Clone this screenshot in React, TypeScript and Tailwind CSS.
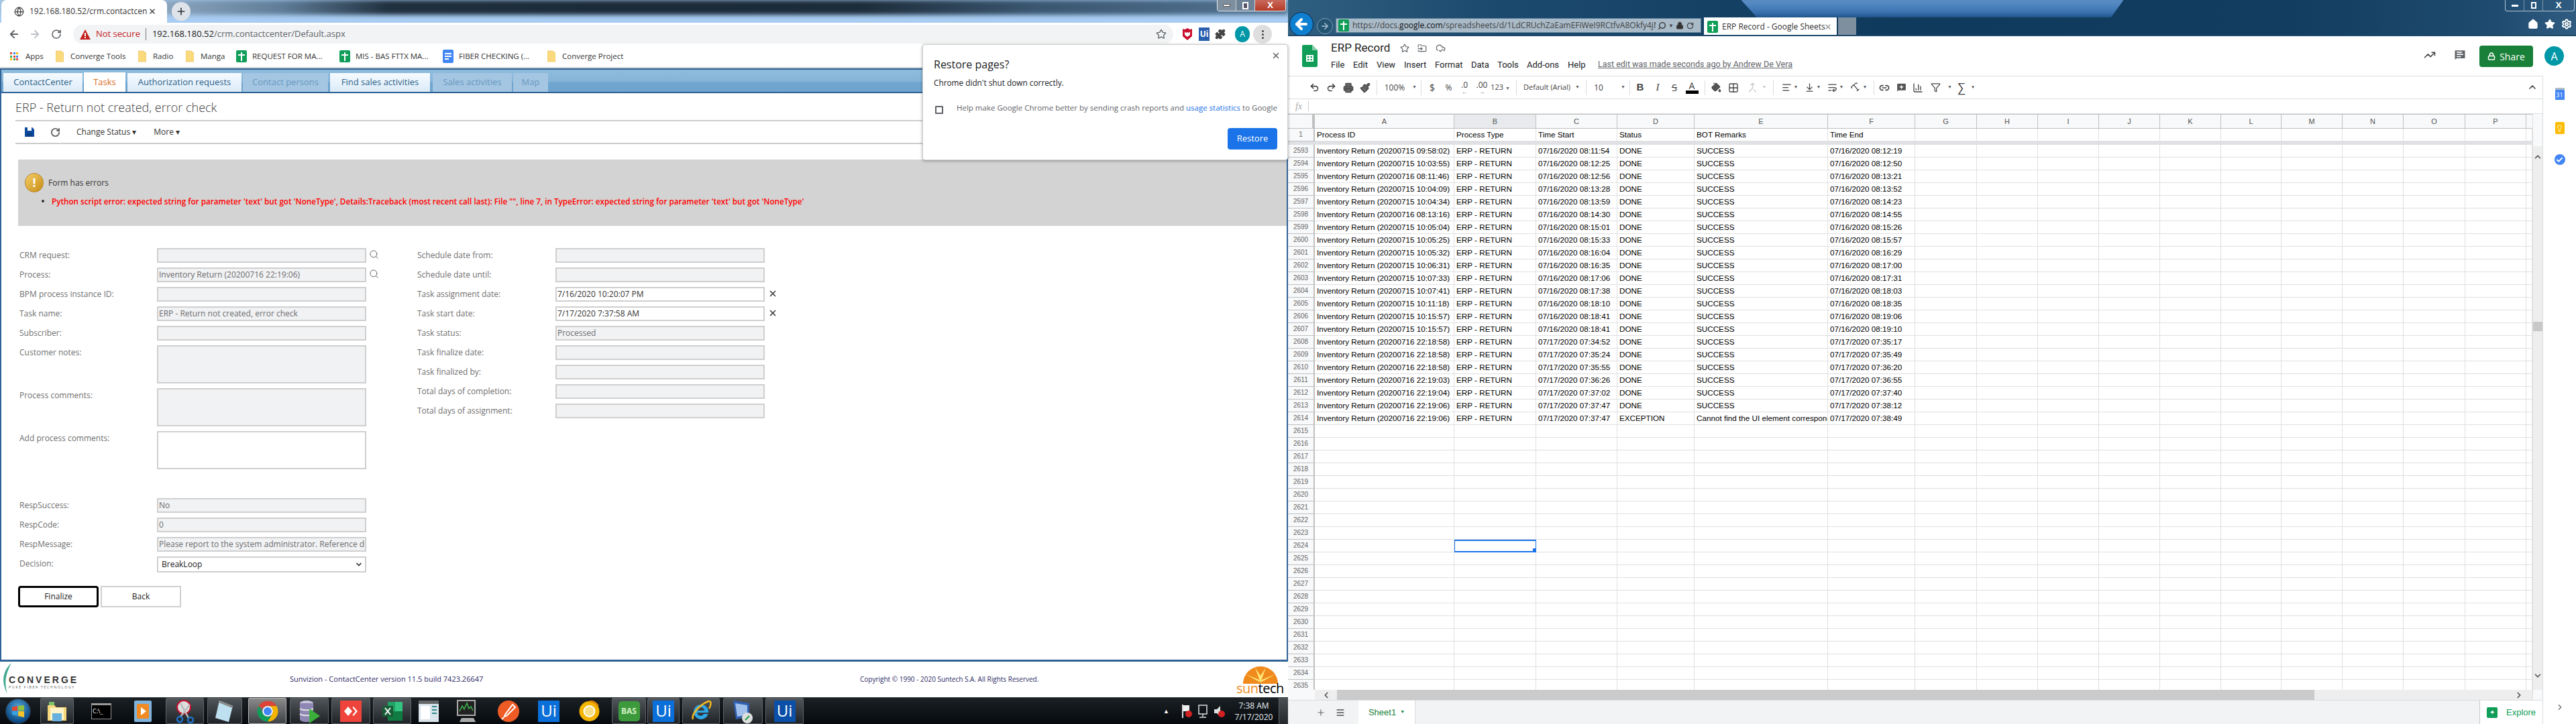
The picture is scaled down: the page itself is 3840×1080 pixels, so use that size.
import React from "react";
import { ArrowLeft, ArrowRight, RotateCw, Star, Puzzle, X, Search, Plus, Globe, Undo2, Redo2, Printer, Paintbrush, PaintBucket, Grid2x2, Link2, MessageSquarePlus, ChartColumn, Filter, AlignLeft, ArrowDownToLine, ChevronUp, ChevronDown, ChevronLeft, ChevronRight, Lock, TrendingUp, MessageSquareText, Menu, House, Settings, FolderInput, CloudCheck, Check, Lightbulb, Merge, Type, WrapText } from "lucide-react";

const Chrome = ({ s = 34 }: { s?: number }) => (
  <svg width={s} height={s} viewBox="0 0 48 48">
    <path d="M5 13A22 22 0 0 1 43 13H24A11 11 0 0 0 14.5 18.5z" fill="#db4437" />
    <path d="M43 13A22 22 0 0 1 24 46L33.5 29.5A11 11 0 0 0 24 13z" fill="#f4b400" />
    <path d="M24 46A22 22 0 0 1 5 13L14.5 29.5A11 11 0 0 0 33.5 29.5z" fill="#0f9d58" />
    <circle cx="24" cy="24" r="11" fill="#fff" />
    <circle cx="24" cy="24" r="8.5" fill="#4285f4" />
  </svg>
);

const SheetIcon = ({ w = 14, h = 18 }: { w?: number; h?: number }) => (
  <svg width={w} height={h} viewBox="0 0 23 33">
    <path d="M2 0H15L23 8V31a2 2 0 0 1-2 2H2a2 2 0 0 1-2-2V2a2 2 0 0 1 2-2z" fill="#0f9d58" />
    <path d="M15 0L23 8H15z" fill="#87ceac" />
    <path d="M6 15H17V25H6zM8 17V19H10.5V17zM12.5 17V19H15V17zM8 21V23H10.5V21zM12.5 21V23H15V21z" fill="#fff" fillRule="evenodd" />
  </svg>
);

const GreenCross = () => (
  <span className="w-[16px] h-[18px] rounded-[2px] bg-[#0f9d58] flex items-center justify-center relative shrink-0">
    <span className="absolute w-[2px] h-[13px] bg-white" />
    <span className="absolute w-[10px] h-[2px] top-[6px] bg-white" />
  </span>
);

const Folder = () => (
  <svg width="12" height="18" viewBox="0 0 12 18" className="block"><path d="M0 1h8l4 3v13H0z" fill="#fbd97d" stroke="#e5c163" strokeWidth="0.7" /></svg>
);

function LeftTitle() {
  return (
    <div className="h-[34px] relative overflow-hidden bg-[#a9cdf2] shrink-0">
      <div className="absolute left-0 top-0 w-[1920px] h-[22px] blur-[3px] bg-[linear-gradient(90deg,#9fbcd8_0px,#8fa9c2_230px,#5f7d98_420px,#20303f_580px,#1c2b3a_900px,#1d2c3a_1280px,#3a5670_1540px,#4b6b88_1800px,#50728f_1920px)]" />
      <div className="h-[34px] w-[247px] bg-white rounded-t-[8px] absolute left-[2px] top-0 flex items-center text-[12px] text-[#333]">
        <Globe className="ml-[19px] text-[#444] shrink-0" size={15} />
        <span className="ml-[8px] w-[175px] overflow-hidden whitespace-nowrap">192.168.180.52/crm.contactcenter</span>
        <X className="ml-[2px] text-[#444] shrink-0" size={12} strokeWidth={3} />
      </div>
      <div className="absolute left-[256px] top-[3px] w-[28px] h-[28px] rounded-full bg-[#dde3e9] flex items-center justify-center"><Plus size={16} className="text-[#333]" strokeWidth={2.5} /></div>
      <div className="absolute left-[1814px] top-0 w-[103px] h-[17px] rounded-b-[4px] border border-t-0 border-[#e8edf2] flex overflow-hidden">
        <div className="w-[28px] bg-[#7d8e9e] border-r border-[#cdd5dc] flex items-center justify-center"><span className="w-[11px] h-[4px] bg-white border border-[#555]" /></div>
        <div className="w-[28px] bg-[#6d8296] border-r border-[#cdd5dc] flex items-center justify-center"><span className="w-[9px] h-[11px] border-2 border-white bg-[#556]" /></div>
        <div className="flex-1 bg-[linear-gradient(180deg,#c86a5c,#b63a28)] flex items-center justify-center text-white font-bold text-[13px]">X</div>
      </div>
    </div>
  );
}

function ChromeBar() {
  return (
    <div className="h-[34px] bg-white flex items-center shrink-0">
      <ArrowLeft size={18} className="ml-[12px] text-[#5f6368]" strokeWidth={2.4} />
      <ArrowRight size={18} className="ml-[13px] text-[#bdc1c6]" strokeWidth={2.4} />
      <RotateCw size={16} className="ml-[15px] text-[#5f6368]" strokeWidth={2.4} />
      <div className="ml-[17px] h-[28px] w-[1640px] bg-[#f1f3f4] rounded-full flex items-center text-[13px]">
        <svg width="16" height="15" viewBox="0 0 16 15" className="ml-[10px]"><path d="M8 0L16 15H0z" fill="#c5221f" /><path d="M7 5h2v5H7zM7 11h2v2H7z" fill="#fff" /></svg>
        <span className="ml-[8px] text-[#c5221f]">Not secure</span>
        <span className="ml-[8px] w-px h-[18px] bg-[#777]" />
        <span className="ml-[9px] text-[#202124]">192.168.180.52<span className="text-[#5f6368]">/crm.contactcenter/Default.aspx</span></span>
        <Star size={16} className="ml-auto mr-[10px] text-[#5f6368]" strokeWidth={2} />
      </div>
      <svg width="14" height="20" viewBox="0 0 14 20" className="ml-[14px]"><path d="M0 2l3 1 4-2 4 2 3-1v11l-7 6-7-6z" fill="#c8102e" /><path d="M3 6l2 2 2-1 2 1 2-2v5l-4 3-4-3z" fill="#fff" /></svg>
      <span className="ml-[10px] w-[16px] h-[20px] bg-[#2a5fb0] text-white text-[12px] font-bold flex items-center justify-center">Ui</span>
      <Puzzle size={16} className="ml-[8px] text-[#444] fill-[#444]" />
      <span className="ml-[14px] w-[22px] h-[24px] rounded-full bg-[#0097a7] text-white text-[12px] flex items-center justify-center">A</span>
      <span className="ml-[5px] w-[28px] h-[28px] rounded-full bg-[#dedede] flex flex-col items-center justify-center gap-[2px]">
        <i className="w-[3px] h-[3px] rounded-full bg-[#444]" /><i className="w-[3px] h-[3px] rounded-full bg-[#444]" /><i className="w-[3px] h-[3px] rounded-full bg-[#444]" />
      </span>
    </div>
  );
}

function Bookmarks() {
  const dots = ["bg-[#ea4335]", "bg-[#4285f4]", "bg-[#fbbc05]", "bg-[#34a853]", "bg-[#ea4335]", "bg-[#4285f4]", "bg-[#fbbc05]", "bg-[#34a853]", "bg-[#ea4335]"];
  return (
    <div className="h-[34px] bg-white border-b-2 border-[#d0d3d6] flex items-center text-[11.5px] text-[#333] shrink-0 whitespace-nowrap">
      <span className="ml-[15px] w-[12px] grid grid-cols-3 gap-[1.5px]">
        {dots.map((c, i) => <i key={i} className={`w-[3px] h-[3px] ${c}`} />)}
      </span>
      <span className="ml-[11px] w-[27px]">Apps</span>
      <span className="ml-[18px]"><Folder /></span><span className="ml-[10px] w-[83px]">Converge Tools</span>
      <span className="ml-[18px]"><Folder /></span><span className="ml-[10px] w-[30px]">Radio</span>
      <span className="ml-[19px]"><Folder /></span><span className="ml-[10px] w-[37px]">Manga</span>
      <span className="ml-[16px] flex"><GreenCross /></span><span className="ml-[8px] w-[105px]">REQUEST FOR MA...</span>
      <span className="ml-[25px] flex"><GreenCross /></span><span className="ml-[8px] w-[112px]">MIS - BAS FTTX MA...</span>
      <span className="ml-[18px] w-[16px] h-[20px] rounded-[2px] bg-[#4285f4] flex flex-col justify-center gap-[2px] px-[3px]"><i className="h-[2px] bg-white" /><i className="h-[2px] bg-white" /><i className="h-[2px] w-[6px] bg-white" /></span>
      <span className="ml-[8px] w-[105px]">FIBER CHECKING (...</span>
      <span className="ml-[27px]"><Folder /></span><span className="ml-[10px]">Converge Project</span>
    </div>
  );
}

const tabs = [
  { t: "ContactCenter", c: "w-[118px] ml-[3px] bg-[linear-gradient(180deg,#f6fbff,#dcebf8)] text-[#2c5f88]" },
  { t: "Tasks", c: "w-[62px] ml-[2px] bg-white text-[#d96a1c] h-[29px]" },
  { t: "Authorization requests", c: "w-[170px] ml-[3px] bg-[linear-gradient(180deg,#f6fbff,#dcebf8)] text-[#2c5f88]" },
  { t: "Contact persons", c: "w-[127px] ml-[2px] bg-[#a4c6e2] text-[#6799bf]" },
  { t: "Find sales activities", c: "w-[149px] ml-[3px] bg-[linear-gradient(180deg,#f6fbff,#dcebf8)] text-[#2c5f88]" },
  { t: "Sales activities", c: "w-[118px] ml-[4px] bg-[#a4c6e2] text-[#6799bf]" },
  { t: "Map", c: "w-[52px] ml-[2px] bg-[#a4c6e2] text-[#6799bf]" },
];

const Input = ({ v, w = "w-[312px]", h = "h-[22px]", white = false, dark = false }: { v?: string; w?: string; h?: string; white?: boolean; dark?: boolean }) => (
  <div className={`${w} ${h} shrink-0 border-2 border-[#cfcfcf] overflow-hidden whitespace-nowrap px-[1px] leading-[18px] text-[12px] ${white ? "bg-white" : "bg-[#f1f2f4]"} ${dark ? "text-[#333]" : "text-[#6d6d6d]"}`}>{v}</div>
);

const Label = ({ t, w }: { t: string; w: string }) => <div className={`${w} text-[12px] text-[#707070] leading-[22px] shrink-0`}>{t}</div>;

const Row = ({ label, w, children, mb = "mb-[7px]" }: { label: string; w: string; children: React.ReactNode; mb?: string }) => (
  <div className={`flex items-start ${mb}`}><Label t={label} w={w} />{children}</div>
);

function Form() {
  const mag = <Search size={15} strokeWidth={1.6} className="ml-[4px] text-[#666] mt-[2px]" />;
  const xb = <X size={14} strokeWidth={3} className="ml-[5px] text-[#444] mt-[3px]" />;
  return (
    <div className="flex mt-[33px] pl-[27px]">
      <div className="w-[593px]">
        <Row label="CRM request:" w="w-[205px]"><Input />{mag}</Row>
        <Row label="Process:" w="w-[205px]"><Input v="Inventory Return (20200716 22:19:06)" />{mag}</Row>
        <Row label="BPM process instance ID:" w="w-[205px]"><Input /></Row>
        <Row label="Task name:" w="w-[205px]"><Input v="ERP - Return not created, error check" /></Row>
        <Row label="Subscriber:" w="w-[205px]"><Input /></Row>
        <Row label="Customer notes:" w="w-[205px]"><Input h="h-[57px]" /></Row>
        <Row label="Process comments:" w="w-[205px]"><Input h="h-[57px]" /></Row>
        <Row label="Add process comments:" w="w-[205px]" mb="mb-[43px]"><Input h="h-[57px]" white /></Row>
        <Row label="RespSuccess:" w="w-[205px]"><Input v="No" /></Row>
        <Row label="RespCode:" w="w-[205px]"><Input v="0" /></Row>
        <Row label="RespMessage:" w="w-[205px]"><Input v="Please report to the system administrator. Reference docu" /></Row>
        <Row label="Decision:" w="w-[205px]" mb="mb-[20px]">
          <div className="w-[312px] h-[24px] border-2 border-[#cfcfcf] bg-white flex items-center justify-between pl-[5px] pr-[3px] text-[12px] text-[#222]">BreakLoop<ChevronDown size={12} strokeWidth={3.5} className="text-[#333]" /></div>
        </Row>
        <div className="flex -ml-[2px] gap-[3px] text-[12px] text-[#222]">
          <div className="w-[120px] h-[32px] border-[3px] border-black rounded-[4px] flex items-center justify-center">Finalize</div>
          <div className="w-[120px] h-[32px] border-2 border-[#d0d0d0] flex items-center justify-center">Back</div>
        </div>
      </div>
      <div>
        <Row label="Schedule date from:" w="w-[206px]"><Input /></Row>
        <Row label="Schedule date until:" w="w-[206px]"><Input /></Row>
        <Row label="Task assignment date:" w="w-[206px]"><Input v="7/16/2020 10:20:07 PM" white dark />{xb}</Row>
        <Row label="Task start date:" w="w-[206px]"><Input v="7/17/2020 7:37:58 AM" white dark />{xb}</Row>
        <Row label="Task status:" w="w-[206px]"><Input v="Processed" /></Row>
        <Row label="Task finalize date:" w="w-[206px]"><Input /></Row>
        <Row label="Task finalized by:" w="w-[206px]"><Input /></Row>
        <Row label="Total days of completion:" w="w-[206px]"><Input /></Row>
        <Row label="Total days of assignment:" w="w-[206px]"><Input /></Row>
      </div>
    </div>
  );
}

function ContactCenter() {
  return (
    <div className="flex-1 border-[2px] border-b-[3px] border-[#2f6295] bg-white flex flex-col min-h-0 overflow-hidden">
      <div className="h-[35px] shrink-0 border-b-[2px] border-[#2f6295] bg-[linear-gradient(180deg,#8fbcdc_0%,#86b5d8_50%,#6fa5cf_60%,#6ea4ce_100%)] flex items-end text-[13px] font-medium">
        {tabs.map((x) => (
          <div key={x.t} className={`h-[28px] flex items-center justify-center whitespace-nowrap ${x.c}`}>{x.t}</div>
        ))}
      </div>
      <div className="pl-[21px] pr-[2px] h-[40px] flex items-end pb-[5px] text-[18px] font-light text-[#3c3c3c] shrink-0 leading-[28px]">ERP - Return not created, error check</div>
      <div className="ml-[21px] border-t-2 border-[#cccccc] border-b-2 h-[36px] flex items-center shrink-0 text-[12px] text-[#333]">
        <svg width="14" height="14" viewBox="0 0 14 14" className="ml-[14px]"><path d="M0 0H11L14 3V14H0z" fill="#0d4c9e" /><path d="M4 0H10V5H4z" fill="#fff" /><path d="M3 8H11V14H3z" fill="#0a3f86" /></svg>
        <RotateCw size={15} className="ml-[24px] text-[#666]" strokeWidth={3} />
        <span className="ml-[24px]">Change Status ▾</span>
        <span className="ml-[26px]">More ▾</span>
      </div>
      <div className="ml-[25px] mt-[23px] h-[99px] bg-[#d3d3d3] shrink-0 relative">
        <div className="flex items-center pl-[10px] pt-[20px] h-[49px] mb-[2px]">
          <span className="w-[28px] h-[29px] rounded-full bg-[linear-gradient(135deg,#f4cf6a,#c78c12)] border border-[#b7862e] text-white font-bold flex items-center justify-center text-[18px]">!</span>
          <span className="ml-[7px] text-[12px] text-[#333]">Form has errors</span>
        </div>
        <div className="flex items-center pl-[35px] text-[11.7px] font-semibold text-[#ff0000] leading-[22px] whitespace-nowrap">
          <span className="w-[4px] h-[4px] rounded-full bg-[#333] mr-[11px]" />
          Python script error: expected string for parameter 'text' but got 'NoneType', Details:Traceback (most recent call last): File "", line 7, in TypeError: expected string for parameter 'text' but got 'NoneType'
        </div>
      </div>
      <Form />
    </div>
  );
}

const TB = ({ c, box = true, active = false, children }: { c: string; box?: boolean; active?: boolean; children: React.ReactNode }) => (
  <div className={`${c} h-[39px] flex items-center justify-center shrink-0 rounded-[2px] ${box ? (active ? "border border-[#b5b5b5] bg-[linear-gradient(180deg,#8a8a8a,#3e4246)]" : "border border-[#5f6367] bg-[linear-gradient(180deg,#50555a,#1f2327)]") : ""}`}>{children}</div>
);
const UiLogo = ({ bg = "bg-[#0a6fd8]", w = "w-[32px]" }: { bg?: string; w?: string }) => (
  <span className={`${w} h-[32px] ${bg} text-white text-[24px] leading-[30px] text-center`}>Ui</span>
);

function Taskbar() {
  return (
    <div className="h-[40px] shrink-0 border-t border-[#3c4248] bg-[linear-gradient(180deg,#1b2025,#060a0e)] flex items-end text-white">
      <div className="ml-[8px] w-[38px] h-[38px] rounded-full bg-[radial-gradient(circle_at_50%_35%,#5aa7d8,#0b4a86_70%,#0a1b33)] border border-[#333] flex items-center justify-center shrink-0">
        <svg width="20" height="18" viewBox="0 0 20 18"><path d="M1 3l8-2v7H1z" fill="#e8472b" /><path d="M10 1l9-1v8h-9z" fill="#8fc13e" /><path d="M1 9h8v7l-8-2z" fill="#39a0e0" /><path d="M10 9h9v9l-9-2z" fill="#f7c32a" /></svg>
      </div>
      <TB c="ml-[14px] w-[50px]">
        <svg width="32" height="34" viewBox="0 0 32 34"><path d="M2 8h10l3 3h15v20H2z" fill="#f6d77b" /><path d="M6 12h20v18H6z" fill="#fff4c8" /><path d="M9 20h14v12H9z" fill="#68b0de" /><path d="M4 3h8v5H4z" fill="#7fc36a" /></svg>
      </TB>
      <TB c="ml-[12px] w-[58px]" box={false}>
        <span className="w-[30px] h-[24px] bg-black border border-[#999] border-t-[3px] text-[9px] leading-[18px] px-[1px] whitespace-nowrap overflow-hidden">C:\_</span>
      </TB>
      <TB c="ml-[6px] w-[54px]" box={false}>
        <span className="w-[26px] h-[32px] bg-[#7fb3dc] flex items-center justify-center rounded-[2px]"><svg width="18" height="22" viewBox="0 0 18 22"><rect width="18" height="22" rx="2" fill="#f08a24" /><path d="M6 5l8 6-8 6z" fill="#fff" /></svg></span>
      </TB>
      <TB c="ml-[7px] w-[57px]">
        <svg width="32" height="36" viewBox="0 0 32 36"><circle cx="14" cy="12" r="10" fill="#ddd" stroke="#c8102e" strokeWidth="2" /><path d="M9 6l12 22M23 8L9 26" stroke="#bbb" strokeWidth="2.5" /><circle cx="8" cy="30" r="4" fill="none" stroke="#1e73c8" strokeWidth="2.5" /><circle cx="24" cy="31" r="4" fill="none" stroke="#1e73c8" strokeWidth="2.5" /></svg>
      </TB>
      <TB c="ml-[5px] w-[52px]">
        <svg width="32" height="36" viewBox="0 0 32 36"><path d="M8 2l20 8-6 24L2 28z" fill="#bfe0f0" /><path d="M8 2l20 8-1 3L7 5z" fill="#888" /></svg>
      </TB>
      <TB c="ml-[9px] w-[57px]" active><Chrome s={34} /></TB>
      <TB c="ml-[5px] w-[58px]">
        <svg width="34" height="36" viewBox="0 0 34 36"><ellipse cx="13" cy="6" rx="10" ry="4" fill="#c9c6dc" /><path d="M3 6v24c0 2 4 4 10 4s10-2 10-4V6z" fill="#8e86b5" /><path d="M3 14c3 3 17 3 20 0M3 22c3 3 17 3 20 0" stroke="#ddd" fill="none" strokeWidth="2" /><path d="M17 14l16 11-16 11z" fill="#3cae3a" /></svg>
      </TB>
      <TB c="ml-[4px] w-[58px]">
        <span className="w-[32px] h-[32px] bg-[#ef443b] flex items-center justify-center"><svg width="22" height="14" viewBox="0 0 22 14"><path d="M7 0l6 7-6 7-6-7zM15 0l6 7-6 7-1.500-1.500L18 7l-4.500-5.500z" fill="#fff" /></svg></span>
      </TB>
      <TB c="ml-[4px] w-[57px]">
        <svg width="34" height="34" viewBox="0 0 34 34"><path d="M10 3h22v28H10z" fill="#21a366" /><path d="M21 3h11v14H21z" fill="#33c481" /><path d="M10 17h22v14H10z" fill="#107c41" /><rect x="2" y="9" width="16" height="16" fill="#185c37" /><path d="M6 12l8 10M14 12l-8 10" stroke="#fff" strokeWidth="2" /></svg>
      </TB>
      <TB c="ml-[6px] w-[40px]" box={false}>
        <svg width="30" height="32" viewBox="0 0 30 32"><rect width="30" height="32" fill="#d9e3ea" /><rect width="30" height="5" fill="#666" /><rect x="3" y="8" width="14" height="20" fill="#fff" /><path d="M20 9h7M20 14h7M20 19h7" stroke="#2e8b8b" strokeWidth="2" /></svg>
      </TB>
      <TB c="ml-[12px] w-[50px]" box={false}>
        <svg width="32" height="36" viewBox="0 0 32 36"><rect x="2" y="2" width="26" height="22" fill="#222" stroke="#aaa" strokeWidth="2" /><path d="M5 18l4-8 3 5 4-9 3 8 3-3 3 6" fill="none" stroke="#3fb950" strokeWidth="1.500" /><path d="M8 28h18l3 6H5z" fill="#aaa" /></svg>
      </TB>
      <TB c="ml-[12px] w-[50px]" box={false}>
        <svg width="32" height="32" viewBox="0 0 32 32"><circle cx="16" cy="16" r="16" fill="#ef5b25" /><path d="M22 6l4 4-13 13-3 1 1-3zM9 25l-3 3" stroke="#fff" strokeWidth="2" fill="none" /></svg>
      </TB>
      <TB c="ml-[10px] w-[50px]" box={false}><UiLogo /></TB>
      <TB c="ml-[10px] w-[50px]" box={false}>
        <svg width="31" height="32" viewBox="0 0 31 32"><circle cx="15.500" cy="16" r="15" fill="#f4b400" /><circle cx="15.500" cy="16" r="8" fill="#f8e08a" stroke="#fff" strokeWidth="2" /><path d="M15.500 1a15 15 0 0 1 13 7.500" stroke="#e08600" strokeWidth="3" fill="none" /></svg>
      </TB>
      <TB c="ml-[9px] w-[51px]">
        <span className="w-[32px] h-[30px] rounded-[5px] bg-[#3d9a3c] text-[#d4f0c4] text-[12px] font-bold leading-[30px] text-center">BAS</span>
      </TB>
      <TB c="ml-[2px] w-[48px]"><UiLogo /></TB>
      <TB c="ml-[4px] w-[56px]">
        <svg width="34" height="34" viewBox="0 0 34 34"><path d="M17 7a11 11 0 1 0 10.500 14H21a5 5 0 0 1-9.500-2H28a11 11 0 0 0-11-12zm-5 9a5 5 0 0 1 10 0z" fill="#2ea7e8" /><path d="M5 29C2 22 14 8 28 2c5-1 4 6 1 11" fill="none" stroke="#f5b91e" strokeWidth="2.500" /></svg>
      </TB>
      <TB c="ml-[5px] w-[59px]">
        <svg width="34" height="36" viewBox="0 0 34 36"><path d="M2 2l24 4v20L6 30z" fill="#2f5fb0" /><path d="M5 6l18 3v14L8 26z" fill="#9fc0ea" /><circle cx="23" cy="28" r="8" fill="#ddd" /><path d="M20 31l6-6" stroke="#1c9c3c" strokeWidth="2" /></svg>
      </TB>
      <TB c="ml-[4px] w-[57px]"><UiLogo bg="bg-[#0a4fa8]" /></TB>
      <div className="ml-auto h-full flex items-center text-[13px]">
        <span className="text-[9px] mr-[18px]">▲</span>
        <svg width="16" height="22" viewBox="0 0 16 22" className="mr-[8px]"><path d="M2 1v20" stroke="#ddd" strokeWidth="2" /><path d="M3 2h9v9H3z" fill="#eee" /><circle cx="11" cy="15" r="5" fill="#d32020" /></svg>
        <svg width="16" height="22" viewBox="0 0 16 22" className="mr-[8px]"><rect x="2" y="2" width="12" height="13" fill="none" stroke="#ddd" strokeWidth="1.500" /><path d="M8 15v4M3 20h10" stroke="#ddd" strokeWidth="1.500" /></svg>
        <svg width="18" height="22" viewBox="0 0 18 22" className="mr-[16px]"><path d="M1 8h4l5-5v16l-5-5H1z" fill="#ddd" /><circle cx="12" cy="15" r="5" fill="#d32020" /></svg>
        <div className="flex flex-col items-center leading-[17px] text-[#e8eef2] w-[52px] text-[12px] whitespace-nowrap"><span>7:38 AM</span><span>7/17/2020</span></div>
        <div className="ml-[11px] w-[14px] h-full border-l border-[#666] bg-[linear-gradient(180deg,#4a4f54,#24282c)]" />
      </div>
    </div>
  );
}

function Footer() {
  return (
    <div className="h-[53px] bg-white shrink-0 flex items-center relative text-[#2e2b66] whitespace-nowrap">
      <div className="w-[128px] h-full relative shrink-0">
        <svg width="16" height="46" viewBox="0 0 16 46" className="absolute left-[2px] top-[2px]"><path d="M15 0C4 10-2 26 9 46 3 26 8 14 15 0z" fill="#3fa88f" /></svg>
        <span className="absolute left-[13px] top-[17px] text-[#333] text-[14px] font-bold tracking-[3px] [font-family:'Liberation_Sans']">CONVERGE</span>
        <span className="absolute left-[13px] top-[35px] text-[#555] text-[5px] tracking-[1.8px]">PURE FIBER TECHNOLOGY</span>
      </div>
      <span className="ml-[304px] w-[252px] text-[11px]">Sunvizion - ContactCenter version 11.5 build 7423.26647</span>
      <span className="ml-[598px] text-[10px]">Copyright © 1990 - 2020 Suntech S.A. All Rights Reserved.</span>
      <div className="absolute right-[4px] top-[7px] w-[73px] h-[44px]">
        <svg width="52" height="26" viewBox="0 0 52 26" className="absolute left-[10px] top-0"><path d="M0 26A26 26 0 0 1 52 26z" fill="#f08a1d" /><path d="M26 24L18 2 26 14 34 2zM26 24L4 12 24 20zM26 24L48 12 28 20z" fill="#ffe87a" /></svg>
        <span className="absolute left-0 top-[22px] text-[20px] leading-[22px] tracking-[-0.5px]"><span className="text-[#f08a1d]">sun</span><span className="text-black">tech</span></span>
      </div>
    </div>
  );
}

function IETitle() {
  return (
    <div className="h-[54px] relative overflow-hidden shrink-0 border-b-2 border-[#1f4a6c] bg-[linear-gradient(90deg,#2f5f80_0,#1c4a6f_300px,#0f3a5c_900px,#123d60_1500px,#1f4b70_1800px,#2f5c80_1920px)]">
      <div className="absolute left-[670px] top-[-6px] w-[580px] h-[32px] blur-[4px] [clip-path:polygon(0_0,100%_0,96%_100%,5%_100%)] bg-[linear-gradient(180deg,#6a9bd0,#2a66a8)]" />
      <div className="absolute left-[2px] top-[18px] w-[36px] h-[36px] rounded-full bg-[#0f7fd0] border border-[#0b2a4a] flex items-center justify-center"><ArrowLeft size={24} strokeWidth={4} className="text-white" /></div>
      <div className="absolute left-[43px] top-[27px] w-[24px] h-[24px] rounded-full bg-[#235472] border border-[#7d9bb2] flex items-center justify-center"><ArrowRight size={14} className="text-[#9db5c8]" strokeWidth={3} /></div>
      <div className="absolute left-[71px] top-[27px] w-[545px] h-[22px] bg-[#a9bac8] border border-[#5f7f98] flex items-center text-[12px] text-[#444] whitespace-nowrap overflow-hidden">
        <span className="ml-[3px] flex"><GreenCross /></span>
        <span className="ml-[5px] w-[452px] overflow-hidden">https://docs.<span className="text-[#111]">google.com</span>/spreadsheets/d/1LdCRUchZaEamEFiWeI9RCtfvA8Okfy4jMp</span>
        <Search size={13} className="ml-[3px] -scale-x-100 text-[#333] shrink-0" strokeWidth={2.5} /><span className="text-[8px] mx-[3px]">▼</span><Lock size={12} className="fill-[#333] shrink-0" /><RotateCw size={11} className="ml-[4px] shrink-0" strokeWidth={3} />
      </div>
      <div className="absolute left-[620px] top-[26px] w-[198px] h-[28px] bg-white flex items-center text-[12px] text-[#333]">
        <span className="ml-[5px] flex"><GreenCross /></span>
        <span className="ml-[6px] w-[152px] whitespace-nowrap">ERP Record - Google Sheets</span>
        <X size={12} className="text-[#999]" strokeWidth={3} />
      </div>
      <div className="absolute left-[820px] top-[26px] w-[27px] h-[27px] bg-[#7e8fa0]" />
      <div className="absolute left-[1814px] top-0 w-[104px] h-[17px] rounded-b-[4px] border border-t-0 border-[#b5c4d0] flex text-white">
        <div className="w-[28px] border-r border-[#7d98ad] flex items-center justify-center"><span className="w-[10px] h-[3px] bg-white" /></div>
        <div className="w-[28px] border-r border-[#7d98ad] flex items-center justify-center"><span className="w-[8px] h-[10px] border-2 border-white" /></div>
        <div className="flex-1 flex items-center justify-center font-bold text-[13px]">X</div>
      </div>
      <div className="absolute right-[6px] top-[28px] flex items-center gap-[9px] text-white">
        <House size={16} fill="#fff" /><Star size={16} fill="#fff" /><Settings size={16} strokeWidth={3} />
      </div>
    </div>
  );
}

function DocsHeader() {
  const m = [
    { t: "File", w: "w-[20px]" }, { t: "Edit", w: "w-[22px]" }, { t: "View", w: "w-[28px]" }, { t: "Insert", w: "w-[33px]" }, { t: "Format", w: "w-[41px]" },
    { t: "Data", w: "w-[26px]" }, { t: "Tools", w: "w-[31px]" }, { t: "Add-ons", w: "w-[48px]" }, { t: "Help", w: "w-[26px]" },
  ];
  return (
    <div className="h-[59px] shrink-0 flex items-center relative bg-white">
      <div className="ml-[21px]"><SheetIcon w={23} h={33} /></div>
      <div className="ml-[20px] flex flex-col [font-family:'Roboto',sans-serif]">
        <div className="flex items-center h-[26px] text-[17px] text-[#222] whitespace-nowrap">
          <span className="w-[84px]">ERP Record</span>
          <Star size={14} className="ml-[19px] text-[#5f6368]" strokeWidth={2} />
          <FolderInput size={14} className="ml-[12px] text-[#5f6368]" strokeWidth={2} />
          <CloudCheck size={15} className="ml-[13px] text-[#5f6368]" strokeWidth={2} />
        </div>
        <div className="flex items-center h-[24px] text-[13px] text-[#202124] gap-[13px] whitespace-nowrap">
          {m.map((x) => <span key={x.t} className={x.w}>{x.t}</span>)}
          <span className="ml-[6px] text-[#5f6368] underline text-[12.5px]">Last edit was made seconds ago by Andrew De Vera</span>
        </div>
      </div>
      <TrendingUp size={18} className="absolute left-[1693px] top-[19px] text-[#444]" strokeWidth={2} />
      <MessageSquareText size={20} className="absolute left-[1737px] top-[18px] text-[#5f6368]" fill="#5f6368" stroke="#fff" />
      <div className="absolute left-[1776px] top-[14px] w-[80px] h-[32px] rounded-[4px] bg-[#188038] text-white text-[14px] flex items-center justify-center gap-[6px]"><Lock size={12} strokeWidth={3} />Share</div>
      <div className="absolute left-[1873px] top-[15px] w-[29px] h-[29px] rounded-full bg-[#0097a7] text-white text-[16px] flex items-center justify-center">A</div>
    </div>
  );
}

const TI = ({ w, children }: { w: string; children?: React.ReactNode }) => (
  <div className={`${w} h-full flex items-center justify-center shrink-0 text-[#444]`}>{children}</div>
);
const Sep = ({ w }: { w: string }) => <TI w={w}><span className="w-px h-[22px] bg-[#dadce0]" /></TI>;
const Car = () => <span className="text-[7px] text-[#5f6368] ml-[3px]">▼</span>;

function Toolbar() {
  const ic = "text-[#444]";
  return (
    <div className="h-[35px] border-y border-[#dadce0] shrink-0 flex items-center text-[12px] pl-[27px] relative">
      <TI w="w-[25px]"><Undo2 size={15} className={ic} strokeWidth={2.5} /></TI>
      <TI w="w-[25px]"><Redo2 size={15} className={ic} strokeWidth={2.5} /></TI>
      <TI w="w-[26px]"><Printer size={16} className={ic} fill="#666" /></TI>
      <TI w="w-[24px]"><Paintbrush size={16} className={ic} fill="#666" /></TI>
      <Sep w="w-[10px]" />
      <TI w="w-[44px]">100%</TI>
      <TI w="w-[12px]"><Car /></TI>
      <Sep w="w-[10px]" />
      <TI w="w-[24px]"><span className="text-[14px]">$</span></TI>
      <TI w="w-[25px]">%</TI>
      <TI w="w-[22px]"><span className="leading-none text-center">.0<span className="block text-[8px] leading-[7px]">←</span></span></TI>
      <TI w="w-[30px]"><span className="leading-none text-center">.00<span className="block text-[8px] leading-[7px]">→</span></span></TI>
      <TI w="w-[25px]"><span className="text-[11px] whitespace-nowrap">123<Car /></span></TI>
      <Sep w="w-[22px]" />
      <TI w="w-[70px]"><span className="text-[11px] whitespace-nowrap">Default (Arial)</span></TI>
      <TI w="w-[18px]"><Car /></TI>
      <Sep w="w-[10px]" />
      <TI w="w-[40px]"><span className="pr-[12px]">10</span></TI>
      <TI w="w-[18px]"><Car /></TI>
      <Sep w="w-[4px]" />
      <TI w="w-[28px]"><span className="font-bold text-[15px] [font-family:'Liberation_Sans']">B</span></TI>
      <TI w="w-[24px]"><span className="italic text-[15px] [font-family:'Liberation_Serif']">I</span></TI>
      <TI w="w-[26px]"><span className="line-through text-[15px]">S</span></TI>
      <TI w="w-[26px]"><span className="flex flex-col items-center leading-[14px] text-[14px]">A<i className="w-[19px] h-[5px] bg-black" /></span></TI>
      <Sep w="w-[12px]" />
      <TI w="w-[22px]"><PaintBucket size={15} className={ic} fill="#555" /></TI>
      <TI w="w-[30px]"><Grid2x2 size={16} className={ic} strokeWidth={2} /></TI>
      <TI w="w-[26px]"><Merge size={15} className="text-[#c4c7cc]" strokeWidth={2} /></TI>
      <TI w="w-[10px]"><span className="text-[7px] text-[#c4c7cc]">▼</span></TI>
      <Sep w="w-[16px]" />
      <TI w="w-[34px]"><AlignLeft size={15} className={ic} strokeWidth={2} /><Car /></TI>
      <TI w="w-[34px]"><ArrowDownToLine size={15} className={ic} strokeWidth={2} /><Car /></TI>
      <TI w="w-[34px]"><WrapText size={15} className={ic} strokeWidth={2} /><Car /></TI>
      <TI w="w-[36px]"><Type size={15} className={`${ic} rotate-[-40deg]`} strokeWidth={2} /><Car /></TI>
      <Sep w="w-[8px]" />
      <TI w="w-[24px]"><Link2 size={16} className={ic} strokeWidth={2.5} /></TI>
      <TI w="w-[26px]"><MessageSquarePlus size={17} className="text-white" fill="#555" /></TI>
      <TI w="w-[24px]"><ChartColumn size={16} className={ic} strokeWidth={2} /></TI>
      <TI w="w-[28px]"><Filter size={15} className={ic} strokeWidth={2} /></TI>
      <TI w="w-[12px]"><Car /></TI>
      <TI w="w-[26px]"><span className="text-[18px]">∑</span></TI>
      <TI w="w-[8px]"><span className="text-[6px]">▼</span></TI>
      <ChevronUp size={16} className="absolute right-[7px] top-[8px] text-[#444]" strokeWidth={2.5} />
    </div>
  );
}

const GRID = "grid grid-cols-[40px_208px_122px_121px_115px_199px_130px_92px_91px_91px_91px_91px_90px_91px_91px_92px_91px_9px]";
const LETTERS = ["A", "B", "C", "D", "E", "F", "G", "H", "I", "J", "K", "L", "M", "N", "O", "P"];

const raw: [string, string, string, string?][] = [
  ["20200715 09:58:02", "07/16/2020 08:11:54", "07/16/2020 08:12:19"],
  ["20200715 10:03:55", "07/16/2020 08:12:25", "07/16/2020 08:12:50"],
  ["20200716 08:11:46", "07/16/2020 08:12:56", "07/16/2020 08:13:21"],
  ["20200715 10:04:09", "07/16/2020 08:13:28", "07/16/2020 08:13:52"],
  ["20200715 10:04:34", "07/16/2020 08:13:59", "07/16/2020 08:14:23"],
  ["20200716 08:13:16", "07/16/2020 08:14:30", "07/16/2020 08:14:55"],
  ["20200715 10:05:04", "07/16/2020 08:15:01", "07/16/2020 08:15:26"],
  ["20200715 10:05:25", "07/16/2020 08:15:33", "07/16/2020 08:15:57"],
  ["20200715 10:05:32", "07/16/2020 08:16:04", "07/16/2020 08:16:29"],
  ["20200715 10:06:31", "07/16/2020 08:16:35", "07/16/2020 08:17:00"],
  ["20200715 10:07:33", "07/16/2020 08:17:06", "07/16/2020 08:17:31"],
  ["20200715 10:07:41", "07/16/2020 08:17:38", "07/16/2020 08:18:03"],
  ["20200715 10:11:18", "07/16/2020 08:18:10", "07/16/2020 08:18:35"],
  ["20200715 10:15:57", "07/16/2020 08:18:41", "07/16/2020 08:19:06"],
  ["20200715 10:15:57", "07/16/2020 08:18:41", "07/16/2020 08:19:10"],
  ["20200716 22:18:58", "07/17/2020 07:34:52", "07/17/2020 07:35:17"],
  ["20200716 22:18:58", "07/17/2020 07:35:24", "07/17/2020 07:35:49"],
  ["20200716 22:18:58", "07/17/2020 07:35:55", "07/17/2020 07:36:20"],
  ["20200716 22:19:03", "07/17/2020 07:36:26", "07/17/2020 07:36:55"],
  ["20200716 22:19:04", "07/17/2020 07:37:02", "07/17/2020 07:37:40"],
  ["20200716 22:19:06", "07/17/2020 07:37:47", "07/17/2020 07:38:12"],
  ["20200716 22:19:06", "07/17/2020 07:37:47", "07/17/2020 07:38:49", "x"],
];

const Cell = ({ children, sel = false }: { children?: React.ReactNode; sel?: boolean }) => (
  <div className={`border-r border-b overflow-hidden whitespace-nowrap pl-[3px] leading-[18px] text-[11.7px] text-black relative ${sel ? "border-t-2 border-l border-[#1a73e8] border-b-2" : "border-[#e0e0e0]"}`}>
    {children}
    {sel ? <span className="absolute right-0 bottom-0 w-[4px] h-[4px] bg-[#1a73e8]" /> : null}
  </div>
);

function SheetRow({ n, d, h = "h-[19px]", sel = false }: { n: number; d?: string[]; h?: string; sel?: boolean }) {
  return (
    <div className={`${GRID} ${h} shrink-0`}>
      <div className="bg-[#f8f9fa] border-r-2 border-b border-[#c0c0c0] text-[#666] text-[10px] leading-[18px] text-center [font-family:'Liberation_Sans']">{n}</div>
      {Array.from({ length: 17 }).map((_, i) => (
        <Cell key={i} sel={sel && i === 1}>{d ? d[i] : ""}</Cell>
      ))}
    </div>
  );
}

function Sheet() {
  const rows: number[] = [];
  for (let i = 2593; i <= 2635; i++) rows.push(i);
  return (
    <div className="flex-1 min-h-0 flex flex-col [font-family:'Liberation_Sans',Arial,sans-serif]">
      <div className="flex flex-1 min-h-0">
        <div className="w-[1855px] overflow-hidden flex flex-col shrink-0">
          <div className={`${GRID} h-[22px] shrink-0 bg-[#f8f9fa] border-y border-[#c0c0c0] text-[11px] text-[#555]`}>
            <div className="border-r-[4px] border-[#c0c0c0]" />
            {LETTERS.map((l) => (
              <div key={l} className={`border-r border-[#c0c0c0] flex items-center justify-center ${l === "B" ? "bg-[#e8eaed]" : ""}`}>{l}</div>
            ))}
            <div />
          </div>
          <SheetRow n={1} d={["Process ID", "Process Type", "Time Start", "Status", "BOT Remarks", "Time End"]} />
          <div className="h-[5px] bg-[#dfe1e5] shrink-0" />
          {rows.map((n, i) => {
            const r = raw[i];
            const d = r ? [`Inventory Return (${r[0]})`, "ERP - RETURN", r[1], r[3] ? "EXCEPTION" : "DONE", r[3] ? "Cannot find the UI element corresponding" : "SUCCESS", r[2]] : undefined;
            return <SheetRow key={n} n={n} d={d} sel={n === 2624} />;
          })}
        </div>
        <div className="w-[15px] bg-[#eeeeee] border-l border-[#e0e0e0] flex flex-col items-center text-[#555]">
          <div className="h-[48px] w-full bg-[#f8f9fa] shrink-0" />
          <ChevronUp size={14} strokeWidth={3} className="mt-[9px] shrink-0" />
          <div className="mt-[239px] h-[14px] w-full bg-[#c8c8c8] shrink-0" />
          <ChevronDown size={14} strokeWidth={3} className="mt-auto mb-[14px] shrink-0" />
        </div>
      </div>
      <div className="h-[15px] bg-[#eeeeee] flex items-center shrink-0">
        <div className="w-[40px] h-full bg-[#f8f9fa]" />
        <div className="w-[33px] h-full flex items-center justify-center"><ChevronLeft size={14} strokeWidth={3} className="text-[#555]" /></div>
        <div className="w-[1457px] h-full bg-[#cbcbcb]" />
        <ChevronRight size={14} strokeWidth={3} className="ml-auto mr-[13px] text-[#555]" />
        <div className="w-[15px] h-full bg-[#f8f9fa] border-l border-[#ddd]" />
      </div>
      <div className="h-[36px] bg-[#f1f3f4] border-t border-[#dadce0] flex items-center relative shrink-0">
        <Plus size={14} className="ml-[42px] text-[#666]" strokeWidth={2} />
        <Menu size={14} className="ml-[15px] text-[#666]" strokeWidth={3} />
        <div className="ml-[20px] w-[85px] h-full bg-white border-r border-[#dadce0] flex items-center justify-center text-[13px] text-[#188038]">Sheet1<span className="text-[7px] ml-[6px]">▼</span></div>
        <div className="absolute right-0 top-0 w-[94px] h-[35px] bg-white border-l border-[#c8c8c8] flex items-center text-[13px] text-[#0f9d58]">
          <span className="ml-[10px] w-[16px] h-[16px] rounded-[2px] bg-[#0f9d58] text-white text-[10px] flex items-center justify-center">✦</span>
          <span className="ml-[13px]">Explore</span>
        </div>
      </div>
    </div>
  );
}

function SidePanel() {
  return (
    <div className="w-[50px] shrink-0 border-l border-[#dadce0] bg-white flex flex-col items-center relative">
      <div className="mt-[18px] w-[14px] h-[18px] bg-[#4285f4] text-white text-[9px] text-center leading-[15px] border-t-[3px] border-[#b0bec5]">31</div>
      <div className="mt-[33px] w-[14px] h-[18px] bg-[#fbbc04] flex items-center justify-center rounded-[2px]"><Lightbulb size={11} className="text-white" /></div>
      <div className="mt-[30px] w-[16px] h-[16px] rounded-full bg-[#4285f4] flex items-center justify-center"><Check size={11} className="text-white" strokeWidth={4} /></div>
      <ChevronRight size={14} className="absolute bottom-[18px] text-[#666]" strokeWidth={2} />
    </div>
  );
}

const Dialog = () => (
  <div className="absolute left-[1375px] top-[66px] w-[545px] h-[173px] bg-white rounded-[4px] border border-[#d0d0d0] shadow-[0_1px_4px_rgba(0,0,0,0.35)] text-[#3c4043]">
    <div className="absolute left-[16px] top-[17px] text-[16px] text-[#202124] leading-[24px]">Restore pages?</div>
    <X size={14} className="absolute right-[10px] top-[9px] text-[#5f6368]" strokeWidth={2.5} />
    <div className="absolute left-[16px] top-[47px] text-[11.8px] text-[#202124] leading-[18px]">Chrome didn't shut down correctly.</div>
    <div className="absolute left-[18px] top-[91px] w-[12px] h-[12px] border-2 border-[#5f6368] rounded-[1px]" />
    <div className="absolute left-[50px] top-[85px] text-[11.5px] leading-[18px] whitespace-nowrap text-[#5f6368]">Help make Google Chrome better by sending crash reports and <span className="text-[#1a73e8]">usage statistics</span> to Google</div>
    <div className="absolute left-[454px] top-[124px] w-[74px] h-[32px] rounded-[4px] bg-[#1a73e8] text-white text-[13px] flex items-center justify-center font-medium">Restore</div>
  </div>
);

export default function App() {
  return (
    <div className="w-[3840px] h-[1080px] flex relative overflow-hidden bg-white [font-family:'Open_Sans','Noto_Sans',sans-serif]">
      <div className="w-[1920px] h-[1080px] shrink-0 flex flex-col">
        <LeftTitle />
        <ChromeBar />
        <Bookmarks />
        <ContactCenter />
        <Footer />
        <Taskbar />
      </div>
      <div className="w-[1920px] h-[1080px] shrink-0 flex flex-col relative">
        <IETitle />
        <DocsHeader />
        <div className="flex flex-1 min-h-0">
          <div className="w-[1870px] flex flex-col min-h-0 shrink-0">
            <Toolbar />
            <div className="h-[22px] shrink-0 border-b border-[#e0e0e0] flex items-center">
              <span className="ml-[11px] text-[#aaa] italic text-[14px] [font-family:'Liberation_Serif']">fx</span>
              <span className="ml-[9px] w-px h-[15px] bg-[#ccc]" />
            </div>
            <Sheet />
          </div>
          <SidePanel />
        </div>
      </div>
      <Dialog />
    </div>
  );
}
